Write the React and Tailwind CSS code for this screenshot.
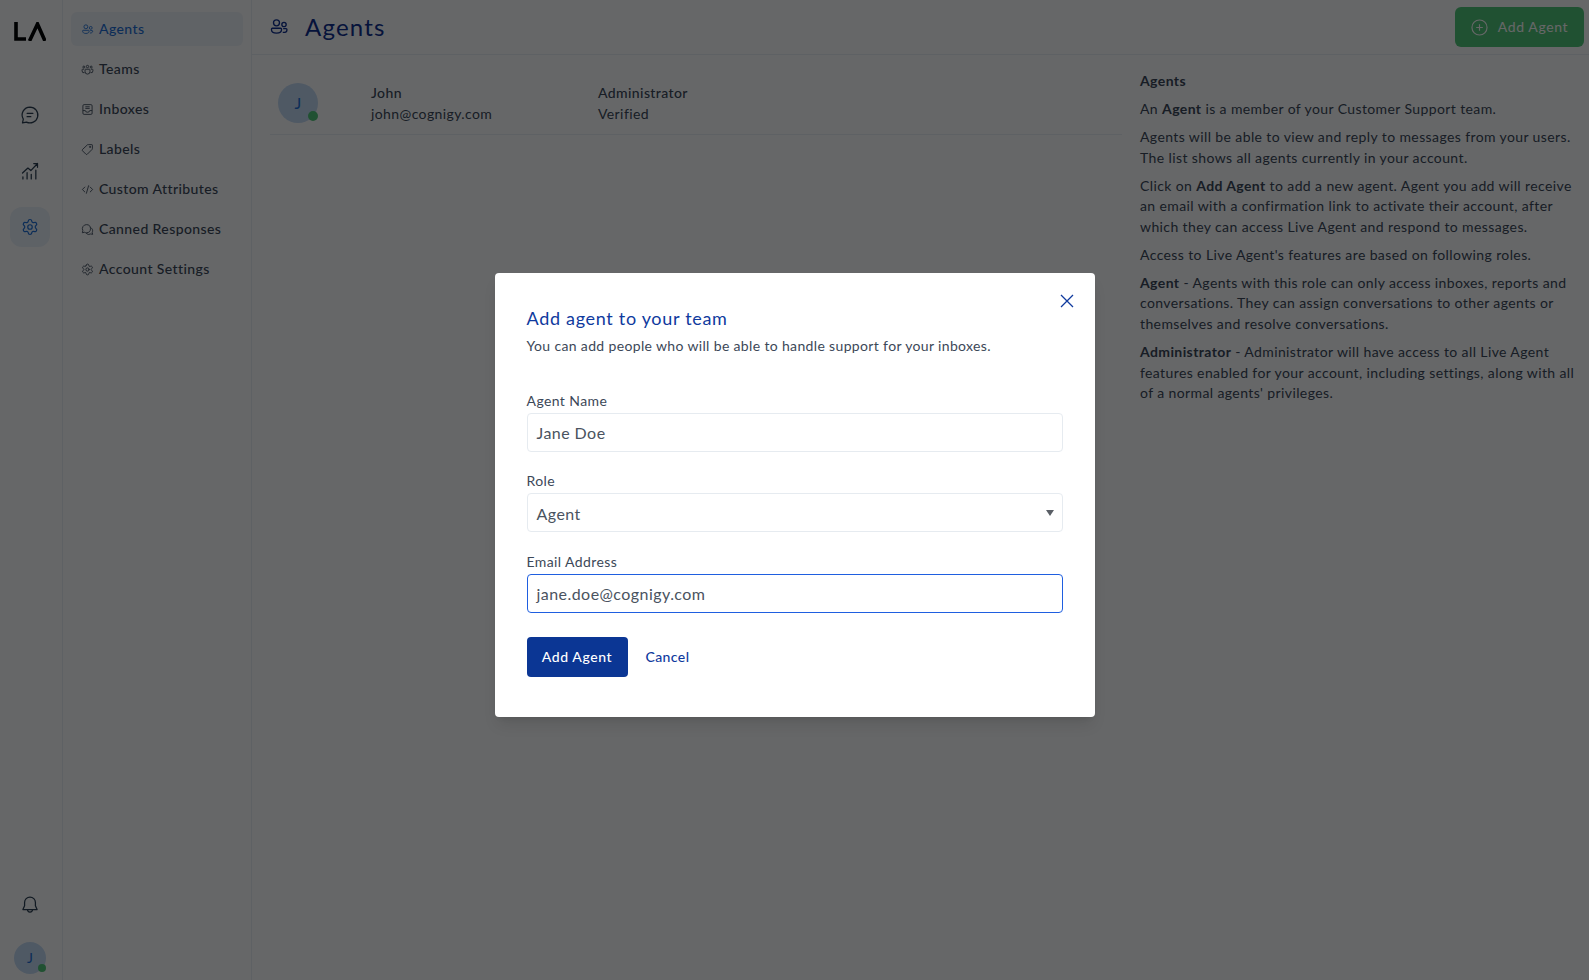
import { Settings } from 'lucide-react'

const sans = { fontFamily: 'Lato, sans-serif' }

const IconAgents = ({ className }) => (
  <svg viewBox="0 0 24 24" fill="none" stroke="currentColor" strokeWidth="1.6" className={className}>
    <circle cx="9" cy="7" r="3.6" />
    <circle cx="18" cy="9" r="2.6" />
    <path d="M4 13.500h10a1 1 0 0 1 1 1v.8c0 2.400-2.500 4-6 4s-6-1.600-6-4v-.8a1 1 0 0 1 1-1z" />
    <path d="M17 14h3.500a1 1 0 0 1 1 1v.5c0 1.900-2 3-4.500 3h-.5" />
  </svg>
)
const IconTeams = ({ className }) => (
  <svg viewBox="0 0 24 24" fill="none" stroke="currentColor" strokeWidth="1.6" className={className}>
    <circle cx="12" cy="6.500" r="2.200" />
    <circle cx="5.200" cy="7.500" r="1.800" />
    <circle cx="18.800" cy="7.500" r="1.800" />
    <path d="M8.500 11.500h7a1 1 0 0 1 1 1V16a4.500 4.500 0 0 1-9 0v-3.500a1 1 0 0 1 1-1z" />
    <path d="M5.500 11.500H3a1 1 0 0 0-1 1v2a3.500 3.500 0 0 0 4.500 3.300M18.500 11.500H21a1 1 0 0 1 1 1v2a3.500 3.500 0 0 1-4.500 3.300" />
  </svg>
)
const IconInbox = ({ className }) => (
  <svg viewBox="0 0 24 24" fill="none" stroke="currentColor" strokeWidth="1.6" className={className}>
    <rect x="3.500" y="3" width="17" height="18" rx="2.200" />
    <path d="M3.500 14h4.500a4 3 0 0 0 8 0h4.500" />
    <path d="M8 7h8M8 10h8" />
  </svg>
)
const IconTag = ({ className }) => (
  <svg viewBox="0 0 24 24" fill="none" stroke="currentColor" strokeWidth="1.6" strokeLinejoin="round" className={className}>
    <path d="M13.500 3H20a1 1 0 0 1 1 1v6.500a2 2 0 0 1-.6 1.400l-8.800 8.800a1.800 1.800 0 0 1-2.500 0l-6.300-6.300a1.800 1.800 0 0 1 0-2.500l8.800-8.300A2 2 0 0 1 13.500 3z" />
    <circle cx="16.800" cy="7.200" r="1" fill="currentColor" />
  </svg>
)
const IconCode = ({ className }) => (
  <svg viewBox="0 0 24 24" fill="none" stroke="currentColor" strokeWidth="1.6" strokeLinecap="round" strokeLinejoin="round" className={className}>
    <path d="M7 7.500 2.500 12 7 16.500M17 7.500l4.500 4.500-4.500 4.500M14 5l-4 14" />
  </svg>
)
const IconCanned = ({ className }) => (
  <svg viewBox="0 0 24 24" fill="none" stroke="currentColor" strokeWidth="1.6" strokeLinejoin="round" className={className}>
    <path d="M10 3a7.500 7.500 0 0 1 0 15c-1.300 0-2.500-.3-3.500-.9L2.500 18l.9-4a7.500 7.500 0 0 1 6.600-11z" />
    <path d="M17.500 8.500c2.500 1 4 3.300 4 5.800 0 1.100-.3 2.200-.8 3.200l.8 3.500-3.500-.8a7 7 0 0 1-8.500-1.200" />
  </svg>
)
const IconGear = ({ className }) => <Settings className={className} strokeWidth={1.6} />
const IconChat = ({ className }) => (
  <svg viewBox="0 0 24 24" fill="none" stroke="currentColor" strokeWidth="1.500" strokeLinecap="round" strokeLinejoin="round" className={className}>
    <path d="M12 2.500a9.500 9.500 0 1 1-4.300 18L3 21.500l1-4.500A9.500 9.500 0 0 1 12 2.500z" />
    <path d="M8.500 10h7M8.500 14h4.500" />
  </svg>
)
const IconChart = ({ className }) => (
  <svg viewBox="0 0 24 24" fill="none" stroke="currentColor" strokeWidth="1.500" strokeLinecap="round" strokeLinejoin="round" className={className}>
    <path d="M3 14.500 9.500 8.500l3.500 3L21 3M16.500 3H21v4.500" />
    <path d="M3.500 19v2.500M8.500 14v7.500M13.500 16v5.500M19 11v10.500" />
  </svg>
)
const IconBell = ({ className }) => (
  <svg viewBox="0 0 24 24" fill="none" stroke="currentColor" strokeWidth="1.500" strokeLinejoin="round" className={className}>
    <path d="M12 2.500a6.500 6.500 0 0 1 6.500 6.500v4l2 4.500h-17l2-4.500V9A6.500 6.500 0 0 1 12 2.500z" />
    <path d="M9 17.500a3 3 0 0 0 6 0" />
  </svg>
)

const menu = [
  ['Agents', IconAgents],
  ['Teams', IconTeams],
  ['Inboxes', IconInbox],
  ['Labels', IconTag],
  ['Custom Attributes', IconCode],
  ['Canned Responses', IconCanned],
  ['Account Settings', IconGear],
]

function Avatar({ size, text, dot }) {
  return (
    <div className={`relative flex shrink-0 items-center justify-center rounded-full bg-[#c6dcf5] text-[#1f6fd6] ${size}`}>
      <span className={text}>J</span>
      <span className={`absolute right-0 bottom-[2px] rounded-full bg-[#52c878] ${dot}`} />
    </div>
  )
}

function Field({ label, children, className }) {
  return (
    <label className={`block ${className}`}>
      <span className="mb-[2px] block text-sm leading-[20px] tracking-[0.4px] text-[#3c4858]">{label}</span>
      {children}
    </label>
  )
}

export default function App() {
  return (
    <div style={sans} className="relative flex h-[980px] w-[1589px] overflow-hidden bg-white text-[#3c4858]">
      <aside className="flex w-[63px] shrink-0 flex-col items-center border-r border-[#ebf0f5] pr-[2px] pb-[6px]">
        <div className="mt-[21px] flex h-[20px] items-center text-black">
          <svg viewBox="0 0 32 19" className="h-[19px] w-[32px]" fill="none" stroke="currentColor" strokeWidth="3.600">
            <path d="M2 0v17h10" />
            <path d="M15.500 19 23.500 2 31 19" />
          </svg>
        </div>
        <div className="mt-[54px] flex flex-col gap-4">
          <div className="flex h-10 w-10 items-center justify-center text-[#2c3e50]"><IconChat className="h-[20px] w-[20px]" /></div>
          <div className="flex h-10 w-10 items-center justify-center text-[#2c3e50]"><IconChart className="h-[20px] w-[20px]" /></div>
          <div className="flex h-10 w-10 items-center justify-center rounded-xl bg-[#ebf2f9] text-[#1f6fd6]"><IconGear className="h-[18px] w-[18px]" /></div>
        </div>
        <div className="mt-auto flex h-10 w-10 items-center justify-center text-[#2c3e50]"><IconBell className="h-[20px] w-[20px]" /></div>
        <div className="mt-[17px]"><Avatar size="h-8 w-8" text="text-sm" dot="h-2 w-2" /></div>
      </aside>

      <nav className="w-[189px] shrink-0 border-r border-[#ebf0f5] px-2 pt-3">
        <ul className="flex flex-col gap-[6px]">
          {menu.map(([name, Icon], i) => (
            <li key={name} className={`flex h-[34px] items-center gap-[5px] rounded-md pl-[10px] text-sm font-medium tracking-[0.4px] ${i === 0 ? 'bg-[#f1f5f9] text-[#1f6fd6]' : 'text-[#3c4858]'}`}>
              <Icon className="h-[13px] w-[13px] shrink-0" />
              {name}
            </li>
          ))}
        </ul>
      </nav>

      <main className="flex min-w-0 flex-1 flex-col">
        <header className="flex h-[55px] shrink-0 items-center border-b border-[#ebf0f5] pr-[5px] pl-[17px]">
          <IconAgents className="h-[20px] w-[20px] text-[#0f2f8f]" />
          <h1 className="ml-[16px] text-2xl tracking-[1.2px] text-[#0f2f8f]">Agents</h1>
          <button className="ml-auto flex h-10 w-[129px] items-center justify-center gap-[10px] rounded-md bg-[#52c878] text-sm tracking-[0.6px] text-white">
            <svg viewBox="0 0 18 18" fill="none" stroke="currentColor" strokeWidth="1.200" className="h-[17px] w-[17px]">
              <circle cx="9" cy="9" r="8" />
              <path d="M9 5.500v7M5.500 9h7" />
            </svg>
            Add Agent
          </button>
        </header>
        <div className="flex flex-1">
          <section className="w-[870px] shrink-0 pt-[17px] pl-[18px]">
            <div className="flex h-[63px] items-start border-b border-[#ebf0f5] pl-[8px] text-sm leading-[21px] tracking-[0.4px]">
              <Avatar size="mt-[11px] h-10 w-10" text="text-base" dot="h-2.5 w-2.5" />
              <div className="ml-[53px] w-[227px] pt-[10px]">
                <div className="font-medium">John</div>
                <div>john@cognigy.com</div>
              </div>
              <div className="pt-[10px]">
                <div className="font-medium">Administrator</div>
                <div>Verified</div>
              </div>
            </div>
          </section>
          <section className="w-[458px] pt-[16px] pl-[18px] text-sm leading-[20.500px] tracking-[0.39px] [&_p]:mb-[7.600px]">
            <p className="font-bold">Agents</p>
            <p>An <b>Agent</b> is a member of your Customer Support team.</p>
            <p>Agents will be able to view and reply to messages from your users. The list shows all agents currently in your account.</p>
            <p>Click on <b>Add Agent</b> to add a new agent. Agent you add will receive an email with a confirmation link to activate their account, after which they can access Live Agent and respond to messages.</p>
            <p>Access to Live Agent's features are based on following roles.</p>
            <p><b>Agent</b> - Agents with this role can only access inboxes, reports and conversations. They can assign conversations to other agents or themselves and resolve conversations.</p>
            <p><b>Administrator</b> - Administrator will have access to all Live Agent features enabled for your account, including settings, along with all of a normal agents' privileges.</p>
          </section>
        </div>
      </main>

      {/* modal */}
      <div className="absolute inset-0 flex items-start justify-center bg-[rgba(0,1,3,0.6)] pt-[273px]">
        <div className="relative h-[444px] w-[600px] rounded-[4px] bg-white px-8 pt-[32px] shadow-lg">
          <button className="absolute top-[21px] right-[21px] text-[#0f3a9e]">
            <svg viewBox="0 0 14 14" fill="none" stroke="currentColor" strokeWidth="1.300" className="h-[14px] w-[14px]">
              <path d="M1 1l12 12M13 1 1 13" />
            </svg>
          </button>
          <h2 className="text-lg leading-[26px] tracking-[0.69px] text-[#0f3a9e]">Add agent to your team</h2>
          <p className="mt-[5px] text-sm leading-[20px] tracking-[0.35px] text-[#3c4858]">You can add people who will be able to handle support for your inboxes.</p>
          <Field label="Agent Name" className="mt-[35px]">
            <div className="flex h-[39px] items-center rounded-[4px] border border-[#e6ebf0] px-[9px] text-base tracking-[0.45px] text-[#4a5360]">Jane Doe</div>
          </Field>
          <Field label="Role" className="mt-[19px]">
            <div className="relative flex h-[39px] items-center rounded-[4px] border border-[#e6ebf0] px-[9px] pt-[2px] text-base tracking-[0.45px] text-[#4a5360]">
              Agent
              <svg viewBox="0 0 8 6" className="absolute top-[16px] right-[8px] h-[6px] w-[8px] text-[#5a5f66]"><path d="M0 0h8L4 6z" fill="currentColor" /></svg>
            </div>
          </Field>
          <Field label="Email Address" className="mt-[20px]">
            <div className="flex h-[39px] items-center rounded-[4px] border border-[#1f5fe0] px-[9px] text-base tracking-[0.45px] text-[#4a5360]">jane.doe@cognigy.com</div>
          </Field>
          <div className="mt-6 flex items-center">
            <button className="h-10 w-[101px] rounded-[4px] bg-[#0b3694] text-sm font-medium tracking-[0.6px] text-white">Add Agent</button>
            <button className="ml-[18px] text-sm font-medium tracking-[0.4px] text-[#0f3a9e]">Cancel</button>
          </div>
        </div>
      </div>
    </div>
  )
}
